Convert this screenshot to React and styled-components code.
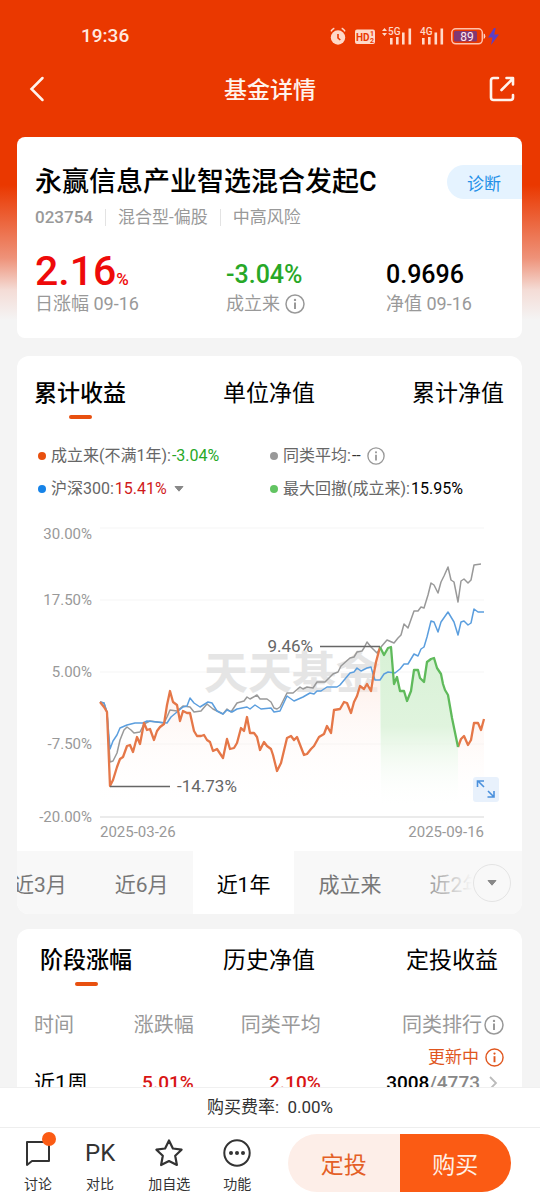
import React from "react";
import styled, { createGlobalStyle } from "styled-components";

const GlobalStyle = createGlobalStyle`
  * { box-sizing: border-box; }
  body {
    margin: 0;
    background: #f4f4f4;
    font-family: Roboto, "Noto Sans CJK SC", sans-serif;
    color: #111;
  }
  button {
    border: 0;
    padding: 0;
    margin: 0;
    background: none;
    font: inherit;
    color: inherit;
    cursor: pointer;
  }
  h1, h2, p, dl, dd, dt, ul { margin: 0; padding: 0; }
  ul { list-style: none; }
  svg { display: block; flex: none; }
`;

const Screen = styled.div`
  display: flex;
  flex-direction: column;
  height: 100vh;
  background: linear-gradient(#ea3800 0, #ea3800 185px, #ee9279 258px, #f4dcd6 290px, #f4f4f4 320px);
`;

const StatusBar = styled.div`
  display: flex;
  justify-content: space-between;
  align-items: center;
  height: 52px;
  padding: 20px 40px 0 81px;
  color: #ffe9e0;
  font-size: 19px;
  font-weight: 500;
  line-height: 32px;
`;

const NavBar = styled.header`
  display: grid;
  grid-template-columns: 60px 1fr 60px;
  align-items: center;
  height: 74px;
  padding: 0 8px;
  color: #fff3ec;
`;

const NavTitle = styled.h1`
  padding-top: 3px;
  font-size: 23px;
  font-weight: 500;
  line-height: 32px;
  text-align: center;
`;

const NavButton = styled.button`
  display: flex;
  justify-content: ${(p) => (p.$end ? "flex-end" : "flex-start")};
  padding: 0 16px 0 20px;
`;

const Content = styled.main`
  flex: 1;
  min-height: 0;
  display: flex;
  flex-direction: column;
  gap: 15px;
  padding: 11px 18px 0 17px;
  overflow: hidden auto;
  scrollbar-width: none;
`;

const Card = styled.section`
  flex: none;
  background: #fff;
  border-radius: 12px;
  overflow: hidden;
`;

const SummaryCard = styled(Card)`
  padding: 25px 0 22px 18px;
  margin-bottom: 3px;
  border-radius: 8px;
`;

const TitleRow = styled.div`
  display: flex;
  align-items: center;
  justify-content: space-between;
  height: 40px;
`;

const FundName = styled.h2`
  font-size: 27px;
  font-weight: 500;
  line-height: 40px;
  color: #000;
  white-space: nowrap;
`;

const DiagnoseButton = styled.button`
  height: 34px;
  padding: 0 21px 0 20px;
  border-radius: 17px 0 0 17px;
  background: #e5f3ff;
  color: #2490e8;
  font-size: 17px;
`;

const MetaRow = styled.ul`
  display: flex;
  align-items: center;
  margin-top: 2px;
  color: #999;
  font-size: 17px;
  line-height: 26px;
`;

const MetaItem = styled.li`
  display: flex;
  align-items: center;
  font-weight: ${(p) => (p.$strong ? 500 : 400)};

  &:not(:first-child)::before {
    content: "";
    width: 1px;
    height: 17px;
    margin: 0 12px;
    background: #e3e3e3;
  }
`;

const Stats = styled.dl`
  display: grid;
  grid-template-columns: 191fr 160fr 136fr;
  margin-top: 12px;
`;

const Stat = styled.div`
  display: flex;
  flex-direction: column-reverse;
`;

const StatValue = styled.dd`
  display: flex;
  align-items: baseline;
  height: 50px;
  color: ${(p) => p.$color};
  font-weight: 500;
  font-size: ${(p) => (p.$large ? 41 : 25)}px;
  line-height: ${(p) => (p.$large ? 58 : 66)}px;

  small { font-size: 17px; }
`;

const StatLabel = styled.dt`
  display: flex;
  align-items: center;
  gap: 5px;
  height: 24px;
  color: #999;
  font-size: 18px;
  line-height: 24px;
`;

const TabList = styled.div`
  display: flex;
  justify-content: space-between;
  padding: ${(p) => (p.$inset ? "15px 24px 0 23px" : "21px 18px 0 17px")};
`;

const Tab = styled.button`
  display: flex;
  flex-direction: column;
  align-items: center;
  height: 45px;
  font-size: 23px;
  font-weight: ${(p) => (p["aria-selected"] ? 500 : 400)};
  line-height: 34px;
  color: #000;

  &::after {
    content: "";
    width: 23px;
    height: 4px;
    margin-top: 4px;
    border-radius: 2px;
    background: ${(p) => (p["aria-selected"] ? "#e8500f" : "transparent")};
  }
`;

const Legend = styled.ul`
  display: grid;
  grid-template-columns: 232fr 234fr;
  padding: 17px 18px 0 21px;
`;

const LegendItem = styled.li`
  display: flex;
  align-items: center;
  height: 33px;
  font-size: 16px;
  line-height: 24px;
  color: #666;
  white-space: nowrap;

  &::before {
    content: "";
    width: 8px;
    height: 8px;
    margin-right: 5px;
    border-radius: 50%;
    background: ${(p) => p.$dot};
  }

  svg { margin-left: 6px; }
`;

const LegendValue = styled.span`
  padding-left: 1px;
  color: ${(p) => p.$color};
`;

const ChartArea = styled.div`
  padding: 15px 17px 0 18px;
  svg { width: 100%; height: auto; }
`;

const RangeBar = styled.div`
  position: relative;
  height: 63px;
  overflow: hidden;
  background: #f8f8f8;
`;

const RangeList = styled.div`
  display: flex;
  height: 100%;
  margin-left: -28px;
`;

const RangeTab = styled.button`
  flex: none;
  padding: 0 24px;
  font-size: 21px;
  color: ${(p) => (p["aria-selected"] ? "#000" : "#777")};
  background: ${(p) => (p["aria-selected"] ? "#fff" : "transparent")};
`;

const RangeMore = styled.div`
  position: absolute;
  top: 0;
  right: 0;
  bottom: 0;
  display: flex;
  align-items: center;
  justify-content: flex-end;
  width: 110px;
  padding-right: 11px;
  background: linear-gradient(to right, #f8f8f800, #f8f8f8 55%);
`;

const RoundButton = styled.button`
  display: flex;
  align-items: center;
  justify-content: center;
  width: 38px;
  height: 38px;
  border: 1px solid #e4e4e4;
  border-radius: 50%;
`;

const Table = styled.table`
  width: 100%;
  table-layout: fixed;
  border-collapse: collapse;
  color: #000;
`;

const TableArea = styled.div`
  padding: 19px 18px 12px 17px;
`;

const HeadCell = styled.th`
  width: ${(p) => p.$width};
  padding: 0;
  color: #999;
  font-size: 20px;
  font-weight: 400;
  line-height: 34px;
  text-align: ${(p) => (p.$left ? "left" : "right")};
  white-space: nowrap;
`;

const Cell = styled.td`
  padding: 3px 0 0;
  color: ${(p) => p.$color};
  font-size: 19px;
  font-weight: 500;
  line-height: 28px;
  text-align: right;
  vertical-align: bottom;
`;

const RowHead = styled.th`
  padding: 0;
  font-size: 21px;
  font-weight: 400;
  line-height: 28px;
  text-align: left;
  vertical-align: bottom;
`;

const Inline = styled.span`
  display: flex;
  align-items: center;
  justify-content: flex-end;
  gap: ${(p) => p.$gap || 0}px;
`;

const Updating = styled(Inline)`
  color: #e0561e;
  font-size: 17px;
  font-weight: 400;
  line-height: 24px;
`;

const Total = styled.span`
  color: #888;
`;

const Footer = styled.footer`
  flex: none;
  background: #fff;
`;

const FeeRate = styled.p`
  height: 41px;
  border-top: 1px solid #f0f0f0;
  border-bottom: 1px solid #eee;
  color: #333;
  font-size: 17px;
  line-height: 39px;
  text-align: center;
`;

const ActionBar = styled.div`
  display: flex;
  justify-content: space-between;
  height: 72px;
  padding: 6px 29px 8px 24px;
`;

const Shortcuts = styled.nav`
  display: flex;
  gap: 33px;
`;

const Shortcut = styled.button`
  display: flex;
  flex-direction: column;
  align-items: center;
  justify-content: space-between;
  height: 62px;
  padding-top: 4px;
  color: #333;
  font-size: 14px;
  line-height: 24px;
`;

const ShortcutIcon = styled.span`
  position: relative;
  display: flex;
  align-items: center;
  justify-content: center;
  height: 30px;
  font-size: 24px;
`;

const Badge = styled.i`
  position: absolute;
  top: -6px;
  right: -4px;
  width: 14px;
  height: 14px;
  border-radius: 50%;
  background: #fb5b14;
`;

const TradeButtons = styled.div`
  display: flex;
  width: 223px;
  height: 58px;
  border-radius: 29px;
  overflow: hidden;
`;

const TradeButton = styled.button`
  flex: 1;
  font-size: 23px;
  color: ${(p) => (p.$primary ? "#fff0e6" : "#e45f26")};
  background: ${(p) => (p.$primary ? "#fb5b14" : "#fdeee8")};
`;

function InfoIcon({ size = 20, color = "#999" }) {
  return (
    <svg width={size} height={size} viewBox="0 0 20 20" fill="none" stroke={color} aria-hidden="true">
      <circle cx="10" cy="10" r="9" strokeWidth="1.5" />
      <path d="M10 8.6V15" strokeWidth="2" />
      <circle cx="10" cy="5.9" r="1.2" fill={color} stroke="none" />
    </svg>
  );
}

function Caret() {
  return (
    <svg width="12" height="8" viewBox="0 0 12 8" aria-hidden="true">
      <path d="M2 1.5h8L6 6.2z" fill="#888" stroke="#888" strokeLinejoin="round" />
    </svg>
  );
}

function StatusIcons() {
  return (
    <svg width="170" height="20" viewBox="0 0 170 20" fill="#ffd9c9" aria-hidden="true">
      <circle cx="8" cy="11.5" r="7.2" />
      <path d="M1 5.4Q2 3.2 4.3 2.3M15 5.4Q14 3.2 11.7 2.3" fill="none" stroke="#ffd9c9" strokeWidth="1.5" />
      <path d="M8 8v4l2.3 2" fill="none" stroke="#ea3800" strokeWidth="1.6" />
      <rect x="25" y="3.5" width="20" height="14.5" rx="2" />
      <g fill="#ea3800" fontFamily="Roboto, sans-serif" fontWeight="700">
        <text x="26" y="14.500" fontSize="10">HD</text>
        <text x="40" y="10" fontSize="7">1</text>
        <text x="40" y="17" fontSize="7">2</text>
      </g>
      <path d="M52 5l2.5-3L57 5zM52 7h5l-2.5 3z" />
      <g fontFamily="Roboto, sans-serif" fontWeight="500" fontSize="10">
        <text x="58" y="9">5G</text>
        <text x="90" y="9">4G</text>
      </g>
      <path d="M60 12h2.6v6.500H60zM66 11h2.600v7.500H66zM72 6.500h2.600v12H72zM78.500 2.500h2.600v16h-2.600z" />
      <path d="M92 12h2.600v6.500H92zM98 11h2.600v7.500H98zM104.500 6.500h2.600v12h-2.600zM110.500 2.500h2.600v16h-2.600z" />
      <rect x="121.800" y="2.800" width="30.500" height="15" rx="4" fill="none" stroke="#ffc2ac" strokeWidth="1.500" />
      <rect x="124" y="5" width="23" height="10.600" rx="1.500" fill="#813872" />
      <path d="M153.700 7.500q1.600 0 1.600 2.800t-1.600 2.800z" />
      <text x="137" y="15" fontSize="12" fontWeight="400" fontFamily="Roboto, sans-serif" fill="#ffe9f0" textAnchor="middle">89</text>
      <path d="M164 2l-6 9.500h4.500l-1.500 7.500 8-10.500h-4.800l1.500-6.500z" fill="#5c3fc6" />
    </svg>
  );
}

const FUND_UP = "100,702 104,707 107,712 110,786 113,780 117,767 120,759 123,757 127,746 130,745 133,752 137,737 140,744 144,723 147,730 150,729 154,740 157,731 160,727 164,724 167,705 170,691 173,702 177,705 180,721 183,711 187,713 190,713 194,731 197,736 201,736 204,735 207,740 210,742 213,751 217,749 223,758 227,739 230,749 234,748 237,743 241,728 244,731 247,717 250,733 254,733 257,737 260,750 264,742 267,746 271,749 273,755 277,771 281,763 287,738 291,736 294,740 297,737 304,755 307,754 311,749 314,746 319,737 324,734 327,726 331,733 334,710 340,709 344,702 347,703 351,713 354,702 357,696 360,686 364,689 367,684 371,691 373,678 376,662 380,647";
const DRAWDOWN = "380,647 384,655 388,648 391,647 394,684 397,677 400,691 404,691 407,701 411,691 414,670 418,670 420,678 424,682 427,662 431,659 434,658 437,668 441,674 443,684 445,690 448,695 452,718 458,747";
const FUND_REST = "458,747 461,739 464,736 468,745 471,740 474,723 478,723 481,730 484,719";
const INDEX = "100,702 104,703 107,713 110,749 113,741 117,735 120,728 127,725 135,723 143,723 147,721 167,723 171,717 177,712 183,707 187,706 190,698 194,703 200,707 208,702 212,703 217,711 223,714 227,710 232,712 237,709 247,707 250,709 255,705 261,709 271,708 274,712 280,711 287,696 294,701 303,697 310,693 314,694 317,691 321,691 327,687 337,687 340,685 350,673 354,672 357,668 361,671 367,668 371,667 373,674 375,680 380,680 384,674 388,672 395,673 400,669 404,664 408,664 414,654 418,656 421,649 424,647 427,637 431,621 434,622 438,632 441,622 448,612 454,622 458,635 461,622 464,621 468,625 471,623 474,609 478,612 484,612";
const PEERS = "100,702 104,703 107,712 110,762 113,761 117,753 120,740 124,730 127,727 131,730 134,733 140,732 144,724 150,721 164,723 167,717 170,710 177,711 183,706 190,707 194,712 201,711 207,704 213,709 223,714 227,709 231,712 237,703 244,701 247,697 250,699 257,695 260,699 267,699 271,702 274,708 277,709 280,707 287,693 293,693 300,687 303,689 307,687 313,688 317,682 325,682 333,674 338,672 341,666 350,658 354,657 357,652 362,651 364,648 367,642 371,647 377,653 381,647 387,640 394,643 398,638 401,635 404,624 408,628 414,611 418,611 421,607 424,608 428,595 431,583 434,585 438,593 441,582 444,576 448,567 451,580 454,582 458,602 461,581 464,579 468,583 471,580 474,565 481,564";

const GRID = [
  { y: 528, labelY: 539, label: "30.00%" },
  { y: 600, labelY: 605, label: "17.50%" },
  { y: 672, labelY: 677, label: "5.00%" },
  { y: 744, labelY: 749, label: "-7.50%" },
  { y: 817, labelY: 822, label: "-20.00%" },
];

function ReturnChart() {
  return (
    <svg viewBox="35 520 470 331" role="img" aria-label="累计收益走势" fontFamily="Roboto, sans-serif">
      <defs>
        <linearGradient id="warm" gradientUnits="userSpaceOnUse" x1="0" y1="645" x2="0" y2="810">
          <stop offset="0" stopColor="#fcdfd4" />
          <stop offset="1" stopColor="#fff" stopOpacity="0" />
        </linearGradient>
        <linearGradient id="fresh" gradientUnits="userSpaceOnUse" x1="0" y1="645" x2="0" y2="808">
          <stop offset="0" stopColor="#d8f1d6" />
          <stop offset="0.5" stopColor="#e0f4de" />
          <stop offset="1" stopColor="#fff" stopOpacity="0" />
        </linearGradient>
      </defs>
      {GRID.map((g, i) => (
        <g key={g.label}>
          <path d={`M100 ${g.y}H484`} stroke={i === 4 ? "#ebebeb" : "#f5f5f5"} strokeWidth={i === 4 ? 2 : 1} />
          <text x="92" y={g.labelY} fontSize="15" fill="#999" textAnchor="end">{g.label}</text>
        </g>
      ))}
      <text x="100" y="837" fontSize="15" fill="#999">2025-03-26</text>
      <text x="484" y="837" fontSize="15" fill="#999" textAnchor="end">2025-09-16</text>
      <text x="204" y="689" fontSize="44" fontWeight="700" fill="#e5e5e5" fontFamily="Noto Sans CJK SC, sans-serif">天天基金</text>
      <polygon points={`100,810 ${FUND_UP} 380,810`} fill="url(#warm)" fillOpacity="0.7" />
      <polygon points={`458,810 ${FUND_REST} 484,810`} fill="url(#warm)" />
      <polygon points={`381,810 ${DRAWDOWN} 458,810`} fill="url(#fresh)" />
      <g fill="none" strokeLinejoin="round" strokeWidth="1.500">
        <polyline points={PEERS} stroke="#999" />
        <polyline points={INDEX} stroke="#5b9ede" />
        <g strokeWidth="2.300">
          <polyline points={FUND_UP} stroke="#e57748" />
          <polyline points={FUND_REST} stroke="#e57748" />
          <polyline points={DRAWDOWN} stroke="#5fba5b" />
        </g>
      </g>
      <path d="M320 646.500H380M110 786.500H170" stroke="#666" strokeWidth="1.500" />
      <g fontSize="17" fill="#666">
        <text x="313" y="652" textAnchor="end">9.46%</text>
        <text x="177" y="792">-14.73%</text>
      </g>
      <rect x="473" y="777" width="26" height="25" rx="3" fill="#e8f1fc" />
      <path d="M484 787l-6-6M477.500 787v-6h6.500M488 791l6 6M494 791v6h-6.500" fill="none" stroke="#4a90dc" strokeWidth="1.600" />
    </svg>
  );
}

const RANGES = ["近3月", "近6月", "近1年", "成立来", "近2年"];

function Tabs({ items, inset }) {
  return (
    <TabList role="tablist" $inset={inset}>
      {items.map((item, i) => (
        <Tab key={item} role="tab" aria-selected={i === 0}>{item}</Tab>
      ))}
    </TabList>
  );
}

export default function App() {
  return (
    <Screen>
      <GlobalStyle />
      <StatusBar>
        <span>19:36</span>
        <StatusIcons />
      </StatusBar>
      <NavBar>
        <NavButton aria-label="返回">
          <svg width="18" height="26" viewBox="0 0 18 26" fill="none" stroke="currentColor" strokeWidth="2.500" strokeLinecap="round">
            <path d="M14.500 2L3.500 13l11 11" />
          </svg>
        </NavButton>
        <NavTitle>基金详情</NavTitle>
        <NavButton $end aria-label="分享">
          <svg width="28" height="28" viewBox="0 0 28 28" fill="none" stroke="currentColor" strokeWidth="2.600" strokeLinecap="round" strokeLinejoin="round">
            <path d="M10 3H5.500Q3 3 3 5.500v17Q3 25 5.500 25h17q2.500 0 2.500-2.500V20" />
            <path d="M13.500 15L24.500 4M18.500 3H25v6.500" />
          </svg>
        </NavButton>
      </NavBar>

      <Content>
        <SummaryCard>
          <TitleRow>
            <FundName>永赢信息产业智选混合发起C</FundName>
            <DiagnoseButton>诊断</DiagnoseButton>
          </TitleRow>
          <MetaRow>
            <MetaItem $strong>023754</MetaItem>
            <MetaItem>混合型-偏股</MetaItem>
            <MetaItem>中高风险</MetaItem>
          </MetaRow>
          <Stats>
            <Stat>
              <StatLabel>日涨幅 09-16</StatLabel>
              <StatValue $large $color="#ee0a0a">2.16<small>%</small></StatValue>
            </Stat>
            <Stat>
              <StatLabel>成立来<InfoIcon /></StatLabel>
              <StatValue $color="#27a827">-3.04%</StatValue>
            </Stat>
            <Stat>
              <StatLabel>净值 09-16</StatLabel>
              <StatValue $color="#000">0.9696</StatValue>
            </Stat>
          </Stats>
        </SummaryCard>

        <Card>
          <Tabs items={["累计收益", "单位净值", "累计净值"]} />
          <Legend>
            <LegendItem $dot="#e8500f">成立来(不满1年):<LegendValue $color="#27a827">-3.04%</LegendValue></LegendItem>
            <LegendItem $dot="#999">同类平均:<LegendValue $color="#333">--</LegendValue><InfoIcon size={18} /></LegendItem>
            <LegendItem $dot="#1683e8">沪深300:<LegendValue $color="#d01a1a">15.41%</LegendValue><Caret /></LegendItem>
            <LegendItem $dot="#62c462">最大回撤(成立来):<LegendValue $color="#000">15.95%</LegendValue></LegendItem>
          </Legend>
          <ChartArea><ReturnChart /></ChartArea>
          <RangeBar>
            <RangeList role="tablist">
              {RANGES.map((r) => (
                <RangeTab key={r} role="tab" aria-selected={r === "近1年"}>{r}</RangeTab>
              ))}
            </RangeList>
            <RangeMore>
              <RoundButton aria-label="更多区间"><Caret /></RoundButton>
            </RangeMore>
          </RangeBar>
        </Card>

        <Card>
          <Tabs inset items={["阶段涨幅", "历史净值", "定投收益"]} />
          <TableArea>
            <Table>
              <thead>
                <tr>
                  <HeadCell $left $width="16%">时间</HeadCell>
                  <HeadCell $width="18%">涨跌幅</HeadCell>
                  <HeadCell $width="27%">同类平均</HeadCell>
                  <HeadCell $width="39%"><Inline $gap={2}>同类排行<InfoIcon /></Inline></HeadCell>
                </tr>
              </thead>
              <tbody>
                <tr>
                  <RowHead>近1周</RowHead>
                  <Cell $color="#d81414">5.01%</Cell>
                  <Cell $color="#d81414">2.10%</Cell>
                  <Cell>
                    <Updating $gap={6}>更新中<InfoIcon size={19} color="#e0561e" /></Updating>
                    <Inline>
                      3008<Total>/4773</Total>
                      <svg width="24" height="16" viewBox="0 0 24 16" fill="none" stroke="#bbb" strokeWidth="1.800" aria-hidden="true">
                        <path d="M10 2l6 6-6 6" />
                      </svg>
                    </Inline>
                  </Cell>
                </tr>
              </tbody>
            </Table>
          </TableArea>
        </Card>
      </Content>

      <Footer>
        <FeeRate>购买费率:&nbsp; 0.00%</FeeRate>
        <ActionBar>
          <Shortcuts>
            <Shortcut>
              <ShortcutIcon>
                <svg width="28" height="28" viewBox="0 0 28 28" fill="none" stroke="#333" strokeWidth="2" strokeLinejoin="round">
                  <path d="M3 3h22v19H8l-5 4z" />
                </svg>
                <Badge />
              </ShortcutIcon>
              讨论
            </Shortcut>
            <Shortcut><ShortcutIcon>PK</ShortcutIcon>对比</Shortcut>
            <Shortcut>
              <ShortcutIcon>
                <svg width="30" height="30" viewBox="0 0 30 30" fill="none" stroke="#333" strokeWidth="2.200" strokeLinejoin="round">
                  <path d="M15 2.500l3.900 8 8.700 1.200-6.400 6 1.700 9.300L15 23l-7.900 4 1.700-9.300-6.400-6 8.700-1.200z" />
                </svg>
              </ShortcutIcon>
              加自选
            </Shortcut>
            <Shortcut>
              <ShortcutIcon>
                <svg width="28" height="28" viewBox="0 0 28 28" fill="#333">
                  <circle cx="14" cy="14" r="12.700" fill="none" stroke="#333" strokeWidth="2" />
                  <circle cx="8" cy="14" r="2" />
                  <circle cx="14" cy="14" r="2" />
                  <circle cx="20" cy="14" r="2" />
                </svg>
              </ShortcutIcon>
              功能
            </Shortcut>
          </Shortcuts>
          <TradeButtons>
            <TradeButton>定投</TradeButton>
            <TradeButton $primary>购买</TradeButton>
          </TradeButtons>
        </ActionBar>
      </Footer>
    </Screen>
  );
}
